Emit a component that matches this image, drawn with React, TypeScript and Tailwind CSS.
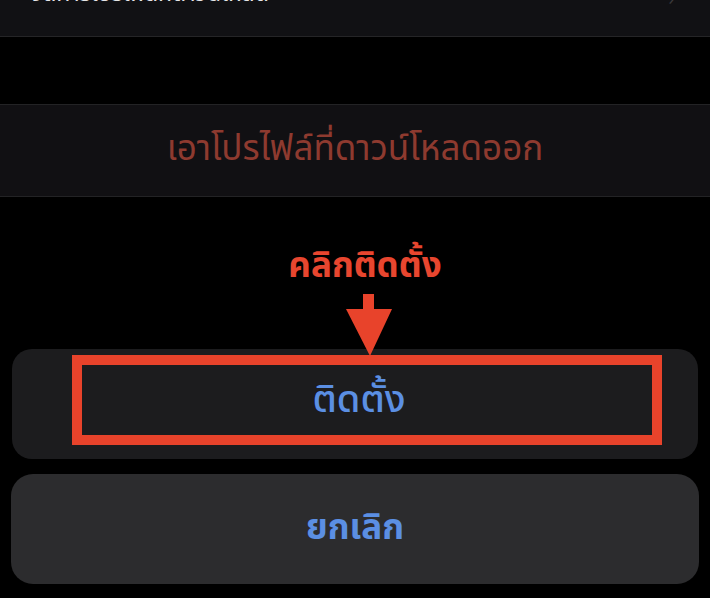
import React from 'react';

const thai = "font-['Noto_Sans_Thai','Noto_Sans','Liberation_Sans',sans-serif]";

function DownArrow() {
  return (
    <svg width="48" height="62" viewBox="0 0 48 62" className="block">
      <rect x="18" y="0" width="11" height="17" fill="#e8432b" />
      <polygon points="1,15 47,15 25,62" fill="#e8432b" />
    </svg>
  );
}

export default function App() {
  return (
    <div className={`h-[598px] w-[710px] overflow-hidden bg-black ${thai}`}>
      <div className="flex h-[37px] items-start justify-between overflow-hidden border-b border-[#252527] bg-[#111114] pl-[30px] pr-[36px]">
        <span className="-mt-[18px] text-[23px] leading-[24px] text-[#e5e5e7]">
          จัดการโปรไฟล์ที่ดาวน์โหลด
        </span>
        <span className="-mt-[14px] text-[18px] text-[#3a3a3c]">›</span>
      </div>

      <div className="mt-[67px] flex h-[93px] items-center justify-center border-y border-[#232325] bg-[#111013]">
        <span className="text-[35px] font-normal text-[#8e3a2f]">
          เอาโปรไฟล์ที่ดาวน์โหลดออก
        </span>
      </div>

      <div className="mt-[48px] flex justify-center pl-[20px]">
        <span className="text-[35px] font-bold leading-[44px] text-[#e8462f]">
          คลิกติดตั้ง
        </span>
      </div>

      <div className="relative z-10 -mb-[7px] mt-[5px] flex justify-center pl-[28px]">
        <DownArrow />
      </div>

      <div className="mx-[12px] flex h-[110px] rounded-[20px] bg-[#1c1c1e] pb-[14px] pl-[60px] pr-[36px] pt-[6px]">
        <div className="flex flex-1 items-center justify-center border-[10px] border-[#e8432b]">
          <span className="mr-[16px] text-[38px] font-medium text-[#5b8fe3]">ติดตั้ง</span>
        </div>
      </div>

      <div className="mx-[11px] mt-[15px] flex h-[110px] items-center justify-center rounded-[22px] bg-[#2c2c2e]">
        <span className="text-[35px] font-bold text-[#5b8fe3]">ยกเลิก</span>
      </div>
    </div>
  );
}
